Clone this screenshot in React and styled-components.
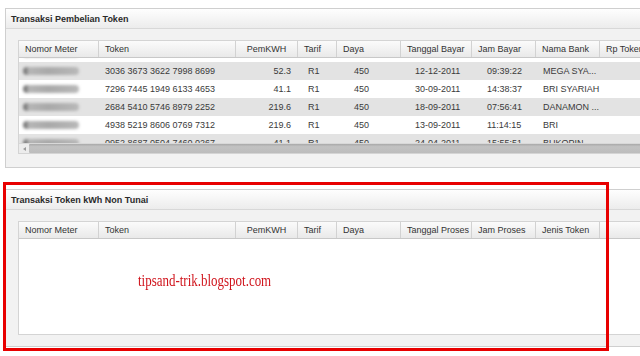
import React from "react";
import styled, { createGlobalStyle } from "styled-components";

const GlobalStyle = createGlobalStyle`
  html, body {
    margin: 0;
    padding: 0;
    background: #ffffff;
    overflow: hidden;
    font-family: "Liberation Sans", Arial, sans-serif;
  }
`;

const COLS = "80px 137px 62px 39px 64px 71px 64px 64px 90px";

const Page = styled.div`
  position: relative;
  width: 640px;
  height: 356px;
  padding-top: 8px;
  box-sizing: border-box;
  display: flex;
  flex-direction: column;
  gap: 21px;
  overflow: hidden;
`;

const Panel = styled.section`
  margin-left: 5px;
  width: 680px;
  border: 1px solid #cfcfcf;
  background: #f2f2f2;
`;

const TitleBar = styled.div`
  height: 19px;
  display: flex;
  align-items: center;
  padding-left: 5px;
  background: linear-gradient(#fefefe, #ececec);
  border-bottom: 1px solid #d8d8d8;
  font-size: 9px;
  font-weight: bold;
  color: #2a2a2a;
`;

const PanelBody = styled.div`
  padding: 11px 0 ${(p) => p.$bottom}px 12px;
`;

const Grid = styled.div`
  border: 1px solid #d4d4d4;
  border-right: none;
  background: #ffffff;
`;

const HeaderRow = styled.div`
  display: grid;
  grid-template-columns: ${COLS};
  height: 16px;
  background: linear-gradient(#fbfbfb, #e9e9e9);
  border-bottom: 1px solid #c8c8c8;
`;

const HeaderCell = styled.div`
  display: flex;
  align-items: center;
  justify-content: ${(p) => p.$align || "flex-start"};
  padding-left: ${(p) => (p.$align ? 0 : 6)}px;
  border-right: 1px solid #d2d2d2;
  font-size: 9px;
  color: #333333;
  white-space: nowrap;
  overflow: hidden;
`;

const Body = styled.div`
  height: ${(p) => p.$height}px;
  overflow: hidden;
  position: relative;
`;

const Rows = styled.div`
  margin-top: -14px;
`;

const Row = styled.div`
  display: grid;
  grid-template-columns: ${COLS};
  height: 18px;
  background: ${(p) => (p.$alt ? "#e3e3e3" : "#ffffff")};
`;

const Cell = styled.div`
  display: flex;
  align-items: center;
  justify-content: ${(p) => p.$align || "flex-start"};
  padding: 0 ${(p) => p.$pr || 0}px 0 ${(p) => p.$pl || 0}px;
  font-size: 9px;
  color: #3a3a3a;
  white-space: nowrap;
  overflow: hidden;
`;

const Blur = styled.span`
  display: block;
  margin-left: 4px;
  width: 56px;
  height: 8px;
  border-radius: 4px;
  background: linear-gradient(90deg, #7c7c7c 0 3px, #b6b6b6 6px, #a9a9a9 45%, #b8b8b8 100%);
  filter: blur(1.6px);
`;

const ScrollBar = styled.div`
  display: flex;
  height: 9px;
  background: #ececec;
  border-top: 1px solid #d8d8d8;
`;

const ScrollArrow = styled.div`
  width: 9px;
  display: flex;
  align-items: center;
  justify-content: center;
  margin-left: 1px;
  &::before {
    content: "";
    border-top: 2px solid transparent;
    border-bottom: 2px solid transparent;
    border-right: 3px solid #9a9a9a;
  }
`;

const ScrollThumb = styled.div`
  flex: 1;
  background: linear-gradient(#a9a9a9, #c2c2c2 30%, #bcbcbc);
  border-radius: 1px;
`;

const Watermark = styled.div`
  position: absolute;
  left: 138px;
  top: 272px;
  font-family: "Liberation Serif", "Times New Roman", serif;
  font-size: 16px;
  line-height: 18px;
  transform: scaleX(0.81);
  transform-origin: left center;
  white-space: nowrap;
  color: #d0141c;
`;

const Highlight = styled.div`
  position: absolute;
  left: 3px;
  top: 182px;
  width: 606px;
  height: 169px;
  box-sizing: border-box;
  border: 3px solid #e80000;
  pointer-events: none;
`;

const purchaseCols = [
  ["Nomor Meter"],
  ["Token"],
  ["PemKWH", "center"],
  ["Tarif"],
  ["Daya"],
  ["Tanggal Bayar"],
  ["Jam Bayar"],
  ["Nama Bank"],
  ["Rp Token"],
];

const nonCashCols = [
  ["Nomor Meter"],
  ["Token"],
  ["PemKWH", "center"],
  ["Tarif"],
  ["Daya"],
  ["Tanggal Proses"],
  ["Jam Proses"],
  ["Jenis Token"],
  [""],
];

const purchases = [
  ["2923 9643 4578 2848 0300", "41.1", "25-09-2012", "09:20:40", "BRI SYARIAH"],
  ["3036 3673 3622 7998 8699", "52.3", "12-12-2011", "09:39:22", "MEGA SYA..."],
  ["7296 7445 1949 6133 4653", "41.1", "30-09-2011", "14:38:37", "BRI SYARIAH"],
  ["2684 5410 5746 8979 2252", "219.6", "18-09-2011", "07:56:41", "DANAMON ..."],
  ["4938 5219 8606 0769 7312", "219.6", "13-09-2011", "11:14:15", "BRI"],
  ["0952 8687 0504 7460 0267", "41.1", "24-04-2011", "15:55:51", "BUKOPIN"],
];

const Header = ({ cols }) => (
  <HeaderRow>
    {cols.map(([label, align], i) => (
      <HeaderCell key={i} $align={align}>
        {label}
      </HeaderCell>
    ))}
  </HeaderRow>
);

export default function App() {
  return (
    <>
      <GlobalStyle />
      <Page>
        <Panel>
          <TitleBar>Transaksi Pembelian Token</TitleBar>
          <PanelBody $bottom={13}>
            <Grid>
              <Header cols={purchaseCols} />
              <Body $height={85}>
                <Rows>
                  {purchases.map(([token, kwh, date, time, bank], i) => (
                    <Row key={token} $alt={i % 2 === 1}>
                      <Cell>
                        <Blur />
                      </Cell>
                      <Cell $pl={6}>{token}</Cell>
                      <Cell $align="flex-end" $pr={7}>
                        {kwh}
                      </Cell>
                      <Cell $pl={10}>R1</Cell>
                      <Cell $pl={17}>450</Cell>
                      <Cell $pl={14}>{date}</Cell>
                      <Cell $pl={15}>{time}</Cell>
                      <Cell $pl={7}>{bank}</Cell>
                      <Cell />
                    </Row>
                  ))}
                </Rows>
              </Body>
              <ScrollBar>
                <ScrollArrow />
                <ScrollThumb />
              </ScrollBar>
            </Grid>
          </PanelBody>
        </Panel>

        <Panel>
          <TitleBar>Transaksi Token kWh Non Tunai</TitleBar>
          <PanelBody $bottom={11}>
            <Grid>
              <Header cols={nonCashCols} />
              <Body $height={95} />
            </Grid>
          </PanelBody>
        </Panel>

        <Watermark>tipsand-trik.blogspot.com</Watermark>
        <Highlight />
      </Page>
    </>
  );
}
